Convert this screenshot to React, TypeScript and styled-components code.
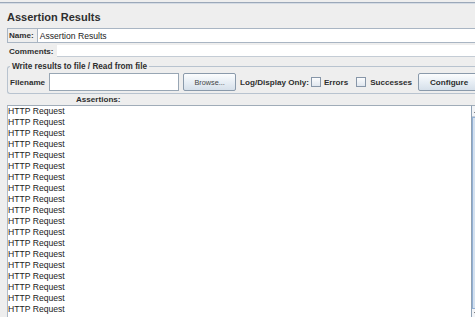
import styled, { createGlobalStyle } from 'styled-components';

const GlobalStyle = createGlobalStyle`
  html, body {
    margin: 0;
    padding: 0;
    overflow: hidden;
    background: #eeeeee;
  }
  body {
    font-family: "Liberation Sans", Arial, sans-serif;
    color: #222222;
  }
`;

const Page = styled.div`
  width: 492px;
  height: 317px;
  display: flex;
  flex-direction: column;
  overflow: hidden;
`;

const TopRule = styled.div`
  margin-top: 2px;
  height: 1px;
  background: #9ba8b9;
  border-bottom: 1px solid #d4dbe4;
`;

const TitleH = styled.h1`
  margin: 0 0 3px 7px;
  padding-top: 5px;
  font-size: 11px;
  line-height: 16px;
  font-weight: bold;
  color: #2e2e2e;
`;

const NameRow = styled.div`
  margin-left: 7px;
  height: 13px;
  display: flex;
  align-items: stretch;
  border: 1px solid #a9b5c3;
  border-right: none;
`;

const CommentsRow = styled.div`
  margin: 2px 0 0 7px;
  height: 12px;
  display: flex;
  align-items: stretch;
`;

const Label = styled.span<{ $pad?: number }>`
  padding-left: ${(p) => p.$pad ?? 0}px;
  font-size: 8.1px;
  font-weight: bold;
  color: #2e2e2e;
  display: flex;
  align-items: center;
  white-space: nowrap;
`;

const Field = styled.div<{ $bordered?: boolean }>`
  flex: 1;
  margin-left: 3px;
  background: #ffffff;
  border-left: ${(p) => (p.$bordered ? '1px solid #a9b5c3' : 'none')};
  border-bottom: ${(p) => (p.$bordered ? 'none' : '1px solid #c4ccd5')};
  padding-left: 2px;
  font-size: 8.6px;
  display: flex;
  align-items: center;
  white-space: nowrap;
`;

const Group = styled.fieldset`
  margin: 4px 0 0 7px;
  padding: 1px 2px 2px 2px;
  border: 1px solid #b8c3cf;
  border-radius: 3px;
  border-right: none;
`;

const Legend = styled.legend`
  padding: 0 2px;
  font-size: 8.2px;
  line-height: 11px;
  font-weight: bold;
  color: #2e2e2e;
`;

const FileRow = styled.div`
  height: 18px;
  display: flex;
  align-items: center;
`;

const FileInput = styled.div`
  margin-left: 4px;
  width: 128px;
  height: 16px;
  background: #ffffff;
  border: 1px solid #98a6b4;
`;

const Button = styled.div<{ $w: number; $bold?: boolean; $gap: number }>`
  margin-left: ${(p) => p.$gap}px;
  width: ${(p) => p.$w}px;
  height: 18px;
  box-sizing: border-box;
  border: 1px solid #8a9aab;
  border-radius: 2px;
  background: linear-gradient(#fcfdfe, #e6edf4 55%, #d6e0ea);
  display: flex;
  align-items: center;
  justify-content: center;
  font-size: ${(p) => (p.$bold ? '8.1px' : '7.3px')};
  font-weight: ${(p) => (p.$bold ? 'bold' : 'normal')};
  color: ${(p) => (p.$bold ? '#2e2e2e' : '#444444')};
  flex-shrink: 0;
`;

const Check = styled.span<{ $gap: number }>`
  margin-left: ${(p) => p.$gap}px;
  width: 8px;
  height: 8px;
  border: 1px solid #8796a8;
  background: linear-gradient(#fbfcfd, #dfe6ee);
  flex-shrink: 0;
`;

const AssertHeader = styled.div`
  height: 11px;
  padding-left: 76px;
  font-size: 8.1px;
  line-height: 11px;
  font-weight: bold;
  color: #2e2e2e;
`;

const ListArea = styled.div`
  flex: 1;
  margin-left: 7px;
  display: flex;
  overflow: hidden;
`;

const List = styled.div`
  width: 463px;
  background: #ffffff;
  border-top: 1px solid #a0acb8;
  border-left: 1px solid #b0bac6;
  overflow: hidden;
`;

const Row = styled.div`
  height: 11px;
  line-height: 11px;
  font-size: 8.6px;
  color: #222222;
  white-space: nowrap;
`;

const ScrollBar = styled.div`
  width: 12px;
  border-left: 1px solid #8fa1b4;
  border-top: 1px solid #a0acb8;
  background: #eef1f4;
  display: flex;
  flex-direction: column;
`;

const Arrow = styled.div<{ $h: number }>`
  height: ${(p) => p.$h}px;
  flex-shrink: 0;
  background: #f2f4f7;
  border-bottom: 1px solid #c6ced8;
  display: flex;
  align-items: center;
  padding-left: 2px;
`;

const Thumb = styled.div`
  height: 190px;
  flex-shrink: 0;
  border: 1px solid #93b0d4;
  background: #d4e1ef;
`;

const rows = Array.from({ length: 20 }, (_, i) => i);

const App = () => {
  return (
    <Page>
      <GlobalStyle />
      <TopRule />
      <TitleH>Assertion Results</TitleH>

      <NameRow>
        <Label $pad={1}>Name:</Label>
        <Field $bordered>Assertion Results</Field>
      </NameRow>
      <CommentsRow>
        <Label $pad={2}>Comments:</Label>
        <Field />
      </CommentsRow>

      <Group>
        <Legend>Write results to file / Read from file</Legend>
        <FileRow>
          <Label>Filename</Label>
          <FileInput />
          <Button $w={53} $gap={4}>
            Browse...
          </Button>
          <Label $pad={4}>Log/Display Only:</Label>
          <Check $gap={2} />
          <Label $pad={3}>Errors</Label>
          <Check $gap={8} />
          <Label $pad={4}>Successes</Label>
          <Button $w={62} $gap={6} $bold>
            Configure
          </Button>
        </FileRow>
      </Group>

      <AssertHeader>Assertions:</AssertHeader>
      <ListArea>
        <List>
          {rows.map((i) => (
            <Row key={i}>HTTP Request</Row>
          ))}
        </List>
        <ScrollBar>
          <Arrow $h={10}>
            <svg width="5" height="3" viewBox="0 0 5 3">
              <path d="M0 3 L2.5 0 L5 3 Z" fill="#333" />
            </svg>
          </Arrow>
          <Thumb />
          <Arrow $h={8}>
            <svg width="5" height="3" viewBox="0 0 5 3">
              <path d="M0 0 L2.5 3 L5 0 Z" fill="#333" />
            </svg>
          </Arrow>
        </ScrollBar>
      </ListArea>
    </Page>
  );
};

export default App;
